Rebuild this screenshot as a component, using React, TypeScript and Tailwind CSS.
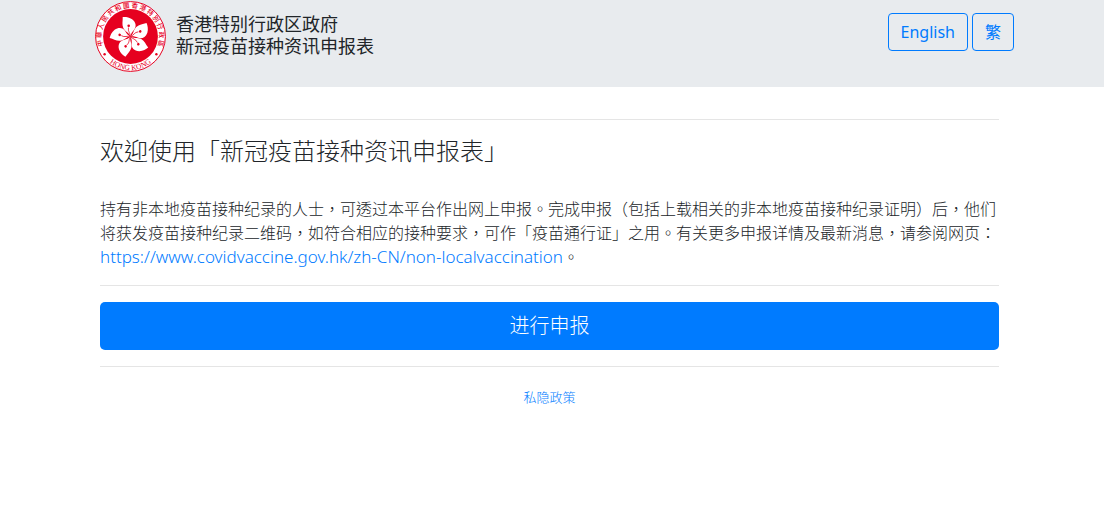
import React from 'react';

const PETALS = [0, 72, 144, 216, 288];
const RING_CHARS = [...'中華人民共和國香港特別行政區'];

const Emblem: React.FC = () => (
  <svg viewBox="0 0 71 71" className="size-[71px] shrink-0" role="img" aria-label="香港特别行政区区徽">
    <defs>
      <path id="ring-bottom" d="M7.5 54 A33.5 33.5 0 0 0 63.5 54" />
      <g id="petal">
        <path
          d="M0 0 C-0.8 -3.4 -5.4 -4.6 -7.2 -8.4 C-8.8 -12 -7.6 -15.4 -7.8 -19.4 C-5 -19.6 -1.6 -19.4 1.6 -17.2 C5.8 -14 6 -9.6 3.6 -6.8 C1.4 -4.4 0.3 -2.6 0 0 Z"
          fill="#ffffff"
        />
        <path d="M0 0 C0 -3.6 -3 -4.8 -2 -9" fill="none" stroke="#e6001f" strokeWidth="0.7" />
        <circle cx="-1.8" cy="-10.8" r="1.3" fill="#e6001f" />
      </g>
    </defs>
    <circle cx="35.5" cy="35.5" r="34.9" fill="#ffffff" stroke="#e6001f" strokeWidth="1" />
    <circle cx="35.5" cy="35.5" r="27.4" fill="#e6001f" />
    <g transform="translate(35.5 35.5)">
      {PETALS.map((angle) => (
        <use key={angle} href="#petal" transform={`rotate(${angle})`} />
      ))}
      {RING_CHARS.map((char, index) => (
        <text
          key={index}
          y="-28.8"
          transform={`rotate(${(index - 6.5) * 15.8})`}
          textAnchor="middle"
          fontSize="6.5"
          fontFamily="'Noto Sans CJK TC', sans-serif"
          fontWeight="500"
          fill="#e6001f"
        >
          {char}
        </text>
      ))}
    </g>
    <text fontSize="7.5" fontFamily="'Liberation Serif', serif" fontWeight="400" fill="#e6001f">
      <textPath href="#ring-bottom" startOffset="50%" textAnchor="middle">
        HONG KONG
      </textPath>
    </text>
    <circle cx="9.6" cy="53.2" r="1.2" fill="#e6001f" />
    <circle cx="61.4" cy="53.2" r="1.2" fill="#e6001f" />
  </svg>
);

const LanguageButton: React.FC<{ label: string }> = ({ label }) => (
  <button
    type="button"
    className="h-[38px] rounded border border-[#007bff] px-3 text-base leading-6 font-normal text-[#007bff] hover:bg-[#007bff] hover:text-white"
  >
    {label}
  </button>
);

const App: React.FC = () => (
  <div
    lang="zh-Hant"
    className="min-h-screen bg-white font-['Noto_Sans','Noto_Sans_CJK_TC',sans-serif] text-base font-light text-[#212529]"
  >
    <header className="bg-[#e8ebee]">
      <div className="mx-auto flex max-w-[960px] items-start pt-px pr-[18px] pb-[15px] pl-[23px]">
        <Emblem />
        <h1 className="ml-2.5 pt-3 text-lg leading-[22px] font-normal">
          香港特别行政区政府
          <br />
          新冠疫苗接种资讯申报表
        </h1>
        <div className="ml-auto flex gap-1 pt-3">
          <LanguageButton label="English" />
          <LanguageButton label="繁" />
        </div>
      </div>
    </header>

    <main className="mx-auto max-w-[960px] pt-8 pr-[33px] pl-7">
      <hr className="border-black/10" />
      <h2 className="mt-4 text-2xl leading-[29px]">欢迎使用「新冠疫苗接种资讯申报表」</h2>
      <p className="mt-8 leading-6">
        持有非本地疫苗接种纪录的人士，可透过本平台作出网上申报。完成申报（包括上载相关的非本地疫苗接种纪录证明）后，他们将获发疫苗接种纪录二维码，如符合相应的接种要求，可作「疫苗通行证」之用。有关更多申报详情及最新消息，请参阅网页：
        <a
          href="https://www.covidvaccine.gov.hk/zh-CN/non-localvaccination"
          className="text-[17px] text-[#007bff] hover:underline"
        >
          https://www.covidvaccine.gov.hk/zh-CN/non-localvaccination
        </a>
        。
      </p>
      <hr className="my-4 border-black/10" />
      <button
        type="button"
        className="h-12 w-full rounded-[5px] bg-[#007bff] text-xl leading-[30px] text-white hover:bg-[#0069d9]"
      >
        进行申报
      </button>
      <hr className="my-4 border-black/10" />
      <footer className="pt-1 text-center text-[13px] leading-5">
        <a href="#privacy" className="text-[#007bff] hover:underline">
          私隐政策
        </a>
      </footer>
    </main>
  </div>
);

export default App;
